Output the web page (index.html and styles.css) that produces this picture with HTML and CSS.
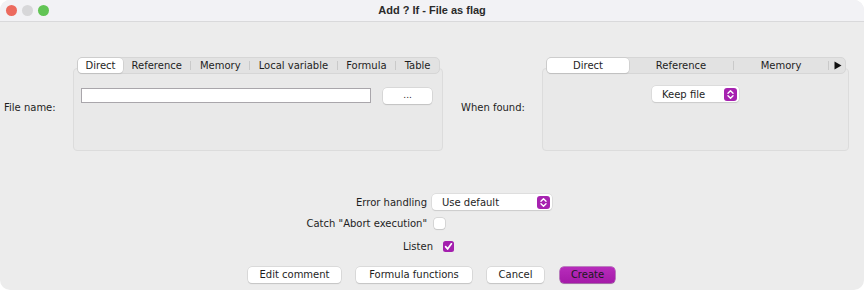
FILE: index.html
```html
<!DOCTYPE html>
<html>
<head>
<meta charset="utf-8">
<title>Add ? If - File as flag</title>
<link rel="stylesheet" href="styles.css">
</head>
<body>
<div class="window">
  <div class="titlebar">
    <div class="lights">
      <span class="light red"></span>
      <span class="light grey"></span>
      <span class="light green"></span>
    </div>
    <div class="title">Add ? If - File as flag</div>
  </div>

  <div class="main">
    <div class="field-label left-label">File name:</div>
    <div class="tabpanel left-panel">
      <div class="tabs left-tabs">
        <div class="tab selected">Direct</div>
        <div class="tab">Reference</div>
        <span class="sep"></span>
        <div class="tab">Memory</div>
        <span class="sep"></span>
        <div class="tab">Local variable</div>
        <span class="sep"></span>
        <div class="tab">Formula</div>
        <span class="sep"></span>
        <div class="tab">Table</div>
      </div>
      <div class="tabbox">
        <div class="file-row">
          <div class="textfield"></div>
          <div class="btn browse">...</div>
        </div>
      </div>
    </div>

    <div class="field-label right-label">When found:</div>
    <div class="tabpanel right-panel">
      <div class="tabs right-tabs">
        <div class="rtab rtab-direct selected">Direct</div>
        <div class="rtab rtab-ref">Reference</div>
        <span class="sep"></span>
        <div class="rtab rtab-mem">Memory</div>
        <span class="sep"></span>
        <div class="rtab rtab-more">
          <svg width="8" height="9" viewBox="0 0 8 9"><polygon points="0.5,0.5 7.5,4.5 0.5,8.5" fill="#111"/></svg>
        </div>
      </div>
      <div class="tabbox tabbox-center">
        <div class="popup keep">
          <span class="popup-text">Keep file</span>
          <svg class="stepper" width="13" height="13" viewBox="0 0 13 13"><rect x="0" y="0" width="13" height="13" rx="3" fill="#a622b0"/><path d="M4 5.2 L6.5 2.8 L9 5.2 M4 7.8 L6.5 10.2 L9 7.8" stroke="#fff" stroke-width="1.4" fill="none" stroke-linecap="round" stroke-linejoin="round"/></svg>
        </div>
      </div>
    </div>
  </div>

  <div class="options">
    <div class="opt-row row-error">
      <div class="opt-label">Error handling</div>
      <div class="popup errpop">
        <span class="popup-text">Use default</span>
        <svg class="stepper" width="13" height="13" viewBox="0 0 13 13"><rect x="0" y="0" width="13" height="13" rx="3" fill="#a622b0"/><path d="M4 5.2 L6.5 2.8 L9 5.2 M4 7.8 L6.5 10.2 L9 7.8" stroke="#fff" stroke-width="1.4" fill="none" stroke-linecap="round" stroke-linejoin="round"/></svg>
      </div>
    </div>
    <div class="opt-row row-catch">
      <div class="opt-label">Catch "Abort execution"</div>
      <span class="checkbox"></span>
    </div>
    <div class="opt-row row-listen">
      <div class="opt-label">Listen</div>
      <svg class="checkbox-on" width="11" height="11" viewBox="0 0 11 11"><rect x="0" y="0" width="11" height="11" rx="2.5" fill="#a41fae"/><path d="M2.6 5.6 L4.6 8 L8.4 2.8" stroke="#fff" stroke-width="1.7" fill="none" stroke-linecap="round" stroke-linejoin="round"/></svg>
    </div>
  </div>

  <div class="buttons">
    <div class="btn b-edit">Edit comment</div>
    <div class="btn b-formula">Formula functions</div>
    <div class="btn b-cancel">Cancel</div>
    <div class="btn b-create">Create</div>
  </div>
</div>
</body>
</html>
```

FILE: styles.css
```css
* { box-sizing: border-box; }
html, body { margin: 0; padding: 0; background: #ffffff; }
body {
  font-family: "DejaVu Sans", "Liberation Sans", sans-serif;
  font-size: 10px;
  color: #1e1e1e;
}
.window {
  width: 864px;
  height: 290px;
  background: #ececec;
  border-radius: 10px;
  overflow: hidden;
  display: flex;
  flex-direction: column;
}
.titlebar {
  height: 22px;
  flex: none;
  background: #f2f2f5;
  border-bottom: 1px solid #d9d9db;
  display: flex;
  align-items: center;
  position: relative;
}
.lights {
  display: flex;
  gap: 5px;
  padding-left: 6px;
  padding-top: 0px;
}
.light {
  width: 11px;
  height: 11px;
  border-radius: 50%;
  display: block;
}
.red { background: #ec6a5e; }
.grey { background: #d7d7d9; }
.green { background: #61c454; }
.title {
  position: absolute;
  left: 0;
  right: 0;
  top: 0;
  height: 21px;
  line-height: 21px;
  text-align: center;
  font-family: "Liberation Sans", sans-serif;
  font-weight: bold;
  font-size: 11px;
  color: #2a2a2a;
}

.main {
  display: flex;
  align-items: center;
  padding: 35px 0 0 4px;
  flex: none;
}
.field-label {
  margin-top: 6px;
  white-space: nowrap;
}
.left-label { width: 69px; }
.right-label { width: 81px; margin-left: 18px; }

.tabpanel {
  display: flex;
  flex-direction: column;
}
.left-panel { width: 370px; }
.right-panel { width: 307px; }

.tabs {
  height: 17px;
  margin: 0 3px 0 4px;
  background: #e2e2e2;
  border: 1px solid #d6d6d6;
  border-radius: 5px;
  display: flex;
  align-items: center;
  position: relative;
  z-index: 1;
}
.tab {
  flex: 1 1 auto;
  text-align: center;
  height: 15px;
  line-height: 15px;
  padding: 0 6px;
  white-space: nowrap;
}
.tab.selected, .rtab.selected {
  background: #ffffff;
  border-radius: 4px;
  box-shadow: 0 0 0 0.5px #c4c4c4, 0 1px 1px rgba(0,0,0,0.12);
}
.left-tabs .tab.selected { flex: 0 0 45px; padding: 0; }
.sep {
  width: 1px;
  height: 9px;
  background: #c9c9c9;
  flex: none;
}
.rtab {
  height: 15px;
  line-height: 15px;
  text-align: center;
  flex: none;
}
.rtab-direct { width: 82px; }
.rtab-ref { width: 104px; }
.rtab-mem { width: 94px; }
.rtab-more { width: 19px; display: flex; align-items: center; justify-content: center; padding-right: 2px; }

.tabbox {
  margin-top: -6px;
  height: 83px;
  background: #e9e9e9;
  border: 1px solid #dcdcdc;
  border-radius: 4px;
  padding: 19px 10px 0 7px;
}
.tabbox-center {
  display: flex;
  justify-content: center;
  align-items: flex-start;
  padding: 17px 0 0 0;
}

.file-row {
  display: flex;
  align-items: flex-start;
  gap: 12px;
}
.textfield {
  width: 291px;
  height: 15px;
  background: #ffffff;
  border: 1px solid #a9a6ab;
}
.btn {
  height: 16px;
  line-height: 15px;
  background: #ffffff;
  border-radius: 4px;
  text-align: center;
  box-shadow: 0 0 0 0.5px #c8c8c8, 0 1px 1px rgba(0,0,0,0.18);
  white-space: nowrap;
}
.browse { width: 49px; font-size: 9px; line-height: 14px; }

.popup {
  height: 16px;
  background: #ffffff;
  border-radius: 4px;
  box-shadow: 0 0 0 0.5px #cfcfcf, 0 1px 1px rgba(0,0,0,0.15);
  display: flex;
  align-items: center;
  justify-content: space-between;
  padding: 0 2px 0 10px;
}
.popup-text { white-space: nowrap; }
.stepper { display: block; flex: none; }
.keep { width: 87px; padding-left: 10px; }
.errpop { width: 120px; padding-left: 10px; }

.options {
  display: flex;
  flex-direction: column;
  margin-top: 43px;
}
.opt-row {
  display: flex;
  align-items: center;
}
.opt-label {
  text-align: right;
  white-space: nowrap;
}
.row-error { height: 16px; }
.row-error .opt-label { width: 427px; margin-right: 5px; }
.row-catch { height: 11px; margin-top: 8px; }
.row-catch .opt-label { width: 427px; margin-right: 7px; }
.row-listen { height: 11px; margin-top: 12px; }
.row-listen .opt-label { width: 433px; margin-right: 10px; }
.checkbox {
  width: 11px;
  height: 11px;
  background: #ffffff;
  border-radius: 3px;
  box-shadow: 0 0 0 0.5px #c2c2c2, 0 1px 1px rgba(0,0,0,0.12);
  display: block;
}
.checkbox-on { display: block; }

.buttons {
  display: flex;
  justify-content: flex-start;
  padding-left: 248px;
  gap: 15px;
  margin-top: 15px;
}
.b-edit { width: 93px; }
.b-formula { width: 116px; }
.b-cancel { width: 57px; }
.b-create {
  width: 55px;
  margin-left: 1px;
  background: linear-gradient(#b72cbb, #a51aa9);
  box-shadow: 0 0 0 0.5px #8a1690, 0 1px 1px rgba(0,0,0,0.2);
  color: #1a1a1a;
}
```
